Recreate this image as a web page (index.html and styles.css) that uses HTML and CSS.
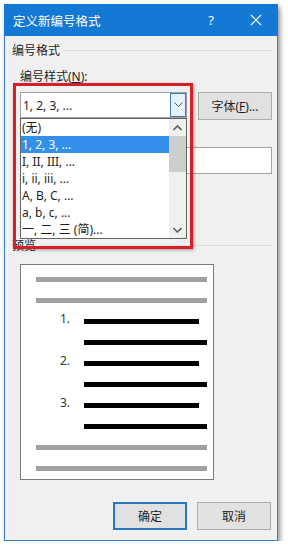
FILE: index.html
```html
<!DOCTYPE html>
<html lang="zh-CN">
<head>
    <meta charset="UTF-8">
    <title>定义新编号格式</title>
    <link rel="stylesheet" href="styles.css">
</head>
<body>
    <div class="window">
        <div class="titlebar">
            <span class="title">定义新编号格式</span>
            <span class="help">?</span>
            <span class="close">
                <svg width="12" height="12" viewBox="0 0 12 12"><path d="M1 1L11 11M11 1L1 11" stroke="#fff" stroke-width="1.2" fill="none"/></svg>
            </span>
        </div>
        <div class="content">
            <div class="group-title">编号格式</div>
            <div class="field-label">编号样式(<u>N</u>):</div>
            <div class="combo-row">
                <div class="combo">
                    <span class="combo-text">1, 2, 3, ...</span>
                    <span class="combo-btn">
                        <svg width="9" height="6" viewBox="0 0 9 6"><path d="M0.5 0.5L4.5 4.5L8.5 0.5" stroke="#555" stroke-width="1" fill="none"/></svg>
                    </span>
                    <!-- open dropdown list -->
                    <div class="dropdown">
                        <ul class="options">
                            <li>(无)</li>
                            <li class="selected">1, 2, 3, ...</li>
                            <li>I, II, III, ...</li>
                            <li>i, ii, iii, ...</li>
                            <li>A, B, C, ...</li>
                            <li>a, b, c, ...</li>
                            <li>一, 二, 三 (简)...</li>
                        </ul>
                        <div class="scrollbar">
                            <span class="arrow">
                                <svg width="9" height="6" viewBox="0 0 9 6"><path d="M0.5 5L4.5 1L8.5 5" stroke="#606060" stroke-width="1.6" fill="none"/></svg>
                            </span>
                            <span class="thumb"></span>
                            <span class="track"></span>
                            <span class="arrow">
                                <svg width="9" height="6" viewBox="0 0 9 6"><path d="M0.5 1L4.5 5L8.5 1" stroke="#606060" stroke-width="1.6" fill="none"/></svg>
                            </span>
                        </div>
                    </div>
                </div>
                <button class="btn font-btn">字体(<u>F</u>)...</button>
            </div>
            <div class="text-input"></div>
            <div class="group-title preview-title">预览</div>
            <div class="preview">
                <div class="line"><span class="bar gray"></span></div>
                <div class="line"><span class="bar gray"></span></div>
                <div class="line"><span class="num">1.</span><span class="bar short"></span></div>
                <div class="line"><span class="num"></span><span class="bar long"></span></div>
                <div class="line"><span class="num">2.</span><span class="bar short"></span></div>
                <div class="line"><span class="num"></span><span class="bar long"></span></div>
                <div class="line"><span class="num">3.</span><span class="bar short"></span></div>
                <div class="line"><span class="num"></span><span class="bar long"></span></div>
                <div class="line"><span class="bar gray"></span></div>
                <div class="line"><span class="bar gray"></span></div>
            </div>
            <div class="footer">
                <button class="btn default">确定</button>
                <button class="btn">取消</button>
            </div>
        </div>
        <div class="highlight"></div>
    </div>
</body>
</html>
```

FILE: styles.css
```css
body {
    margin: 0;
    background: #fff;
    font-family: "Noto Sans", "Noto Sans CJK SC", sans-serif;
    font-size: 12px;
    color: #1e1e1e;
}
.window {
    position: relative;
    width: 274px;
    margin: 4px 0 0 4px;
    box-shadow: 2px 3px 5px rgba(0, 0, 0, 0.45);
}
.titlebar {
    height: 32px;
    background: #1479d4;
    color: #fff;
    display: flex;
    align-items: center;
    padding-left: 9px;
}
.title {
    flex: 1;
    font-size: 12.5px;
}
.help {
    width: 46px;
    text-align: center;
    font-size: 13px;
}
.close {
    width: 44px;
    display: flex;
    justify-content: center;
}
.content {
    height: 505px;
    background: #f0f0f0;
    border: 1px solid #3d7fc4;
    border-top: none;
    padding: 7px 0 0 7px;
    box-sizing: border-box;
}
.group-title {
    display: flex;
    align-items: center;
    line-height: 16px;
    padding-right: 5px;
}
.group-title::after {
    content: "";
    flex: 1;
    border-top: 1px solid #dcdcdc;
    margin-left: 4px;
    margin-top: -2px;
}
.field-label {
    margin: 10px 0 0 8px;
    line-height: 16px;
}
.combo-row {
    display: flex;
    align-items: flex-start;
    margin: 7px 0 0 8px;
}
.combo {
    position: relative;
    width: 167px;
    height: 26px;
    background: #fff;
    border: 1px solid #a0a0a0;
    box-sizing: border-box;
    display: flex;
    align-items: center;
}
.combo-text {
    flex: 1;
    padding-left: 2px;
}
.combo-btn {
    width: 16px;
    height: 24px;
    background: #e5f1fb;
    border: 1px solid #3c7fb1;
    box-sizing: border-box;
    display: flex;
    align-items: center;
    justify-content: center;
}
.dropdown {
    position: absolute;
    top: 25px;
    left: -1px;
    width: 167px;
    height: 121px;
    background: #fff;
    border: 1px solid #646464;
    box-sizing: border-box;
    display: flex;
    z-index: 2;
}
.options {
    flex: 1;
    list-style: none;
    margin: 0;
    padding: 0;
}
.options li {
    height: 17px;
    line-height: 17px;
    padding-left: 1px;
    white-space: nowrap;
}
.options li.selected {
    background: #3390ea;
    color: #fff;
}
.scrollbar {
    width: 17px;
    display: flex;
    flex-direction: column;
    background: #f0f0f0;
}
.arrow {
    height: 17px;
    display: flex;
    align-items: center;
    justify-content: center;
}
.thumb {
    height: 36px;
    background: #cdcdcd;
}
.track {
    flex: 1;
}
.btn {
    font-family: inherit;
    font-size: 12px;
    color: #1e1e1e;
    background: #e1e1e1;
    border: 1px solid #adadad;
    padding: 0;
    width: 74px;
    height: 28px;
}
.font-btn {
    margin-left: 11px;
}
.text-input {
    margin: 27px 0 0 8px;
    width: 252px;
    height: 27px;
    background: #fff;
    border: 1px solid #a5a5a5;
    box-sizing: border-box;
}
.preview-title {
    margin-top: 64px;
}
.preview {
    margin: 10px 0 0 8px;
    width: 194px;
    height: 216px;
    background: #fff;
    border: 1px solid #7a7a7a;
    box-sizing: border-box;
    padding-top: 4px;
}
.line {
    height: 21px;
    display: flex;
    align-items: center;
}
.bar {
    height: 5px;
    background: #000;
}
.bar.gray {
    background: #a0a0a0;
    width: 171px;
    margin-left: 15px;
}
.num {
    width: 24px;
    margin-left: 39px;
    margin-top: -6px;
    color: #333;
}
.bar.short {
    width: 115px;
}
.bar.long {
    width: 123px;
}
.footer {
    display: flex;
    justify-content: flex-end;
    gap: 10px;
    margin: 22px 6px 0 0;
}
.btn.default {
    border: 2px solid #2a78c4;
}
/* red annotation frame round the open list */
.highlight {
    position: absolute;
    left: 9px;
    top: 79px;
    width: 180px;
    height: 166px;
    border: 3px solid #d5202a;
    box-sizing: border-box;
    box-shadow: 1px 1px 3px rgba(0, 0, 0, 0.35);
    z-index: 3;
}
```
